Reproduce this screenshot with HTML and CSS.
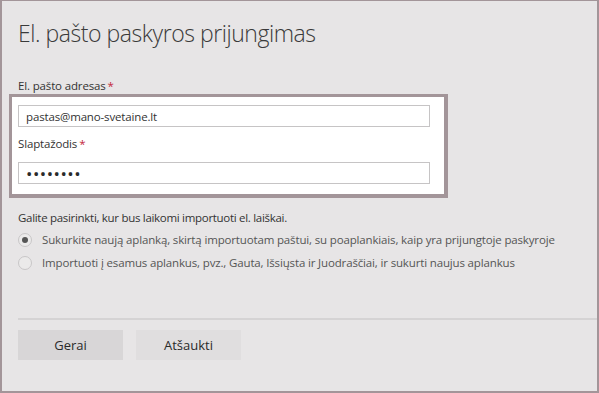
FILE: index.html
```html
<!DOCTYPE html>
<html lang="lt">
<head>
    <meta charset="UTF-8">
    <title>El. pašto paskyros prijungimas</title>
    <link rel="stylesheet" href="styles.css">
</head>
<body>
    <div class="dialog">
        <h1 class="title">El. pašto paskyros prijungimas</h1>

        <label class="field-label" for="email">El. pašto adresas<span class="req">*</span></label>
        <div class="highlight">
            <input id="email" class="text-input" type="text" value="pastas@mano-svetaine.lt">
            <label class="field-label inner" for="pass">Slaptažodis<span class="req">*</span></label>
            <input id="pass" class="text-input" type="password" value="12345678">
        </div>

        <p class="hint">Galite pasirinkti, kur bus laikomi importuoti el. laiškai.</p>
        <div class="options">
            <label class="option">
                <span class="radio checked"></span>
                Sukurkite naują aplanką, skirtą importuotam paštui, su poaplankiais, kaip yra prijungtoje paskyroje
            </label>
            <label class="option">
                <span class="radio"></span>
                Importuoti į esamus aplankus, pvz., Gauta, Išsiųsta ir Juodraščiai, ir sukurti naujus aplankus
            </label>
        </div>

        <div class="footer">
            <button class="btn primary">Gerai</button>
            <button class="btn">Atšaukti</button>
        </div>
    </div>
</body>
</html>
```

FILE: styles.css
```css
* {
    margin: 0;
    padding: 0;
    box-sizing: border-box;
}

body {
    font-family: 'Open Sans', 'Noto Sans', sans-serif;
    background: #e7e5e6;
    color: #333;
}

.dialog {
    width: 599px;
    height: 393px;
    border: 2px solid #a39599;
    border-top-width: 1px;
    background: #e7e5e6;
    padding-left: 16px;
    display: flex;
    flex-direction: column;
}

.title {
    font-size: 23px;
    font-weight: 300;
    color: #3a3a3a;
    line-height: 32px;
    margin-top: 16px;
    letter-spacing: -0.45px;
}

.field-label {
    display: block;
    font-size: 11.5px;
    letter-spacing: -0.15px;
    color: #333;
    line-height: 16px;
}

.dialog > .field-label {
    margin-top: 29px;
}

.req {
    color: #c3283b;
    margin-left: 2px;
}

/* highlighted credentials box */
.highlight {
    margin-left: -9px;
    width: 439px;
    background: #fff;
    border: 3px solid #a39599;
    border-right-width: 4px;
    border-bottom-width: 4px;
    padding: 8px 0 10px 6px;
}

.text-input {
    display: block;
    width: 412px;
    height: 22px;
    border: 1px solid #c6c4c5;
    background: #fff;
    font-family: inherit;
    font-size: 11.5px;
    letter-spacing: -0.15px;
    color: #333;
    padding: 0 7px;
    outline: none;
}

.text-input[type="password"] {
    font-size: 17px;
    letter-spacing: 0.5px;
    color: #2a2a2a;
}

.field-label.inner {
    margin: 9px 0 10px;
}

.hint {
    font-size: 11.5px;
    letter-spacing: -0.3px;
    color: #333;
    margin-top: 12px;
    line-height: 16px;
}

.options {
    margin-top: 6px;
    display: flex;
    flex-direction: column;
    gap: 7px;
}

.option {
    display: flex;
    align-items: center;
    gap: 10px;
    font-size: 11.5px;
    letter-spacing: -0.15px;
    color: #555;
    line-height: 16px;
}

.radio {
    width: 14px;
    height: 14px;
    border-radius: 50%;
    border: 1px solid #c8c6c7;
    background: #ebeaea;
    flex-shrink: 0;
    display: flex;
    align-items: center;
    justify-content: center;
}

.radio.checked::after {
    content: '';
    width: 6px;
    height: 6px;
    border-radius: 50%;
    background: #555;
}

.footer {
    margin-top: auto;
    margin-bottom: 31px;
    border-top: 2px solid #d5d3d4;
    padding-top: 10px;
    display: flex;
    gap: 13px;
}

.btn {
    width: 105px;
    height: 30px;
    border: none;
    background: #e0dedf;
    font-family: inherit;
    font-size: 13px;
    color: #2a2a2a;
}

.btn.primary {
    background: #d8d6d7;
}
```
